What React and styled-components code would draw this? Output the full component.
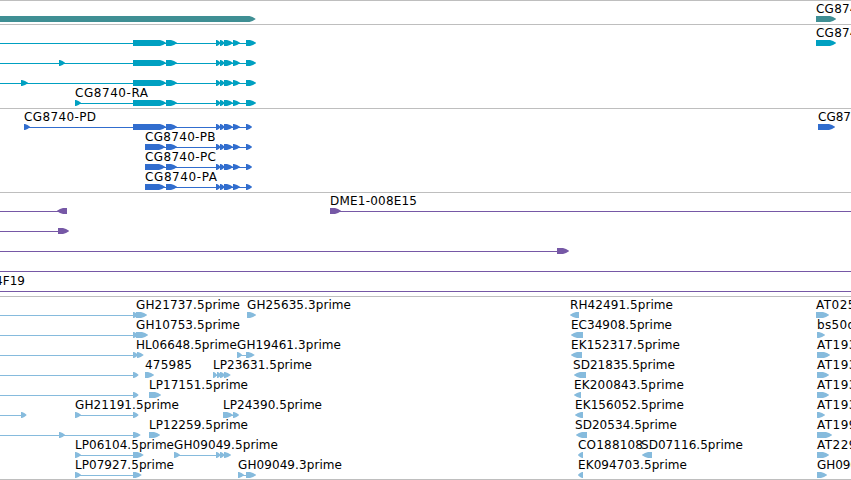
import React from 'react'
import styled, { createGlobalStyle } from 'styled-components';

const GlobalStyle = createGlobalStyle`
    body {
    margin: 0;
    background-color: white;
    overflow: hidden;
    }
`;

const Browser = styled.div`
    box-sizing: border-box;
    width: 851px;
    height: 480px;
    overflow: hidden;
    display: flex;
    flex-direction: column;
    border-bottom: 1px solid #bebebe;
`;

const Track = styled.section`
    flex: none;
    display: flex;
    flex-direction: column;
    padding-top: 3px;
    border-top: 1px solid #bebebe;
    color: ${props => props.$color};
`;

const Lane = styled.svg`
    display: block;
    flex: none;
    width: 851px;
    height: 20px;
    overflow: visible;
    fill: currentColor;
`;

const Label = styled.text`
    fill: black;
    font-family: "DejaVu Sans", sans-serif;
    font-size: 12px;
`;

// lines: [from, to], glyphs: [from, to, reversed], labels: [x, text, width]
const mrnaExons = [[133, 166], [166, 177], [216, 220.5], [220, 224.5], [224, 233], [233, 240], [246, 256]];
const cdsExons = [[166, 177], [216, 220.5], [220, 224.5], [224, 233], [233, 240], [246, 252]];

const tracks = [
  {
    color: '#3f8f94',
    lanes: [
      { glyphs: [[-10, 255.5], [816, 836]], labels: [[816, 'CG874', 41.5]] },
    ],
  },
  {
    color: '#00a0c1',
    lanes: [
      { lines: [[0, 250]], glyphs: [...mrnaExons, [816, 836]], labels: [[816, 'CG874', 41.5]] },
      { lines: [[0, 250]], glyphs: [[59, 65], ...mrnaExons] },
      { lines: [[0, 250]], glyphs: [[21, 28], ...mrnaExons] },
      { lines: [[75, 250]], glyphs: [[75, 81], ...mrnaExons], labels: [[75, 'CG8740-RA', 73]] },
    ],
  },
  {
    color: '#316dce',
    lanes: [
      { lines: [[24, 250]], glyphs: [[24, 30], [133, 166], ...cdsExons, [818, 835]], labels: [[24, 'CG8740-PD', 72], [818, 'CG87', 33]] },
      { lines: [[145, 250]], glyphs: [[145, 165], ...cdsExons], labels: [[145, 'CG8740-PB', 70.5]] },
      { lines: [[145, 250]], glyphs: [[145, 165], ...cdsExons], labels: [[145, 'CG8740-PC', 71]] },
      { lines: [[145, 250]], glyphs: [[145, 165], ...cdsExons], labels: [[145, 'CG8740-PA', 72]] },
    ],
  },
  {
    color: '#7658a6',
    lanes: [
      { lines: [[0, 60], [334, 851]], glyphs: [[57, 67, true], [330, 341]], labels: [[330, 'DME1-008E15', 87]] },
      { lines: [[0, 60]], glyphs: [[58, 69]] },
      { lines: [[0, 560]], glyphs: [[557, 569]] },
      { lines: [[0, 851]] },
      { lines: [[0, 851]], labels: [[-5, '4F19', 30]] },
    ],
  },
  {
    color: '#86bbdd',
    lanes: [
      {
        lines: [[0, 134]],
        glyphs: [[133, 138], [136, 147], [247, 256], [570, 579, true], [816, 829]],
        labels: [[136, 'GH21737.5prime', 104], [247, 'GH25635.3prime', 104], [570, 'RH42491.5prime', 103], [816, 'AT025', 39.5]],
      },
      {
        lines: [[0, 134]],
        glyphs: [[133, 138], [136, 148], [571, 583, true], [817, 825]],
        labels: [[136, 'GH10753.5prime', 104], [571, 'EC34908.5prime', 101], [817, 'bs50d', 38]],
      },
      {
        lines: [[0, 134], [237, 248]],
        glyphs: [[133, 138], [137, 143.5], [237, 242], [246, 254.5], [571, 582, true], [817, 830]],
        labels: [[136, 'HL06648.5prime', 101], [237, 'GH19461.3prime', 104], [571, 'EK152317.5prime', 109], [817, 'AT193', 39.5]],
      },
      {
        lines: [[0, 134]],
        glyphs: [[133, 138.5], [145, 154], [213, 217], [217, 221], [220, 225], [224, 230.5], [574, 586, true], [817, 829]],
        labels: [[145, '475985', 47], [213, 'LP23631.5prime', 99], [573, 'SD21835.5prime', 102], [817, 'AT193', 39.5]],
      },
      {
        lines: [[0, 134]],
        glyphs: [[133, 138.5], [149, 161], [574, 581, true], [817, 829]],
        labels: [[149, 'LP17151.5prime', 99], [574, 'EK200843.5prime', 110], [817, 'AT193', 39.5]],
      },
      {
        lines: [[0, 22], [75, 134], [226, 235]],
        glyphs: [[21, 26.5], [75, 81], [133, 138.5], [223, 233], [233, 239], [575, 583, true], [817, 825]],
        labels: [[75, 'GH21191.5prime', 104], [223, 'LP24390.5prime', 99], [575, 'EK156052.5prime', 109], [817, 'AT193', 39.5]],
      },
      {
        lines: [[0, 134]],
        glyphs: [[59, 65], [133, 140.5], [149, 160], [576, 587, true], [817, 832]],
        labels: [[149, 'LP12259.5prime', 99], [575, 'SD20534.5prime', 102], [817, 'AT199', 39.5]],
      },
      {
        lines: [[75, 134], [174, 218]],
        glyphs: [[75, 81], [133, 143.5], [174, 180], [216, 220.5], [220, 224.5], [224, 231], [578, 583, true], [642, 652, true], [817, 829]],
        labels: [[75, 'LP06104.5prime', 99], [174, 'GH09049.5prime', 104], [578, 'CO188108', 65], [641, 'SD07116.5prime', 102], [817, 'AT229', 39.5]],
      },
      {
        lines: [[75, 134], [238, 250]],
        glyphs: [[75, 81], [133, 141.5], [238, 244], [246, 256], [578, 583, true], [817, 827]],
        labels: [[75, 'LP07927.5prime', 99], [238, 'GH09049.3prime', 104], [578, 'EK094703.5prime', 109], [817, 'GH090', 41]],
      },
    ],
  },
];

const Glyph = ({from, to, reversed}) => {
  const head = Math.min(6, to - from - 1);
  const tip = reversed ? from : to;
  const tail = reversed ? to : from;
  const dir = reversed ? 1 : -1;
  const shoulder = tip + dir * head;
  const cheek = tip + dir * head * 0.5;
  return (
    <polygon
      points={`${tail},12 ${shoulder},12 ${cheek},13 ${tip},14.8 ${tip},15.2 ${cheek},17 ${shoulder},18 ${tail},18`}
    />
  )
}

const FeatureLane = ({lines = [], glyphs = [], labels = []}) => {
  return (
    <Lane>
        {lines.map(([from, to]) => (
          <rect key={from} x={from} y="15" width={to - from} height="1"/>
        ))}
        {glyphs.map(([from, to, reversed]) => (
          <Glyph key={from} from={from} to={to} reversed={reversed}/>
        ))}
        {labels.map(([x, text, width]) => (
          <Label key={x} x={x} y="9" textLength={width}>{text}</Label>
        ))}
    </Lane>
  )
}

const App = () => {
  return (
    <Browser>
        <GlobalStyle/>
        {tracks.map(track => (
          <Track key={track.color} $color={track.color}>
              {track.lanes.map((lane, i) => (
                <FeatureLane key={i} {...lane}/>
              ))}
          </Track>
        ))}
    </Browser>
  )
}

export default App
